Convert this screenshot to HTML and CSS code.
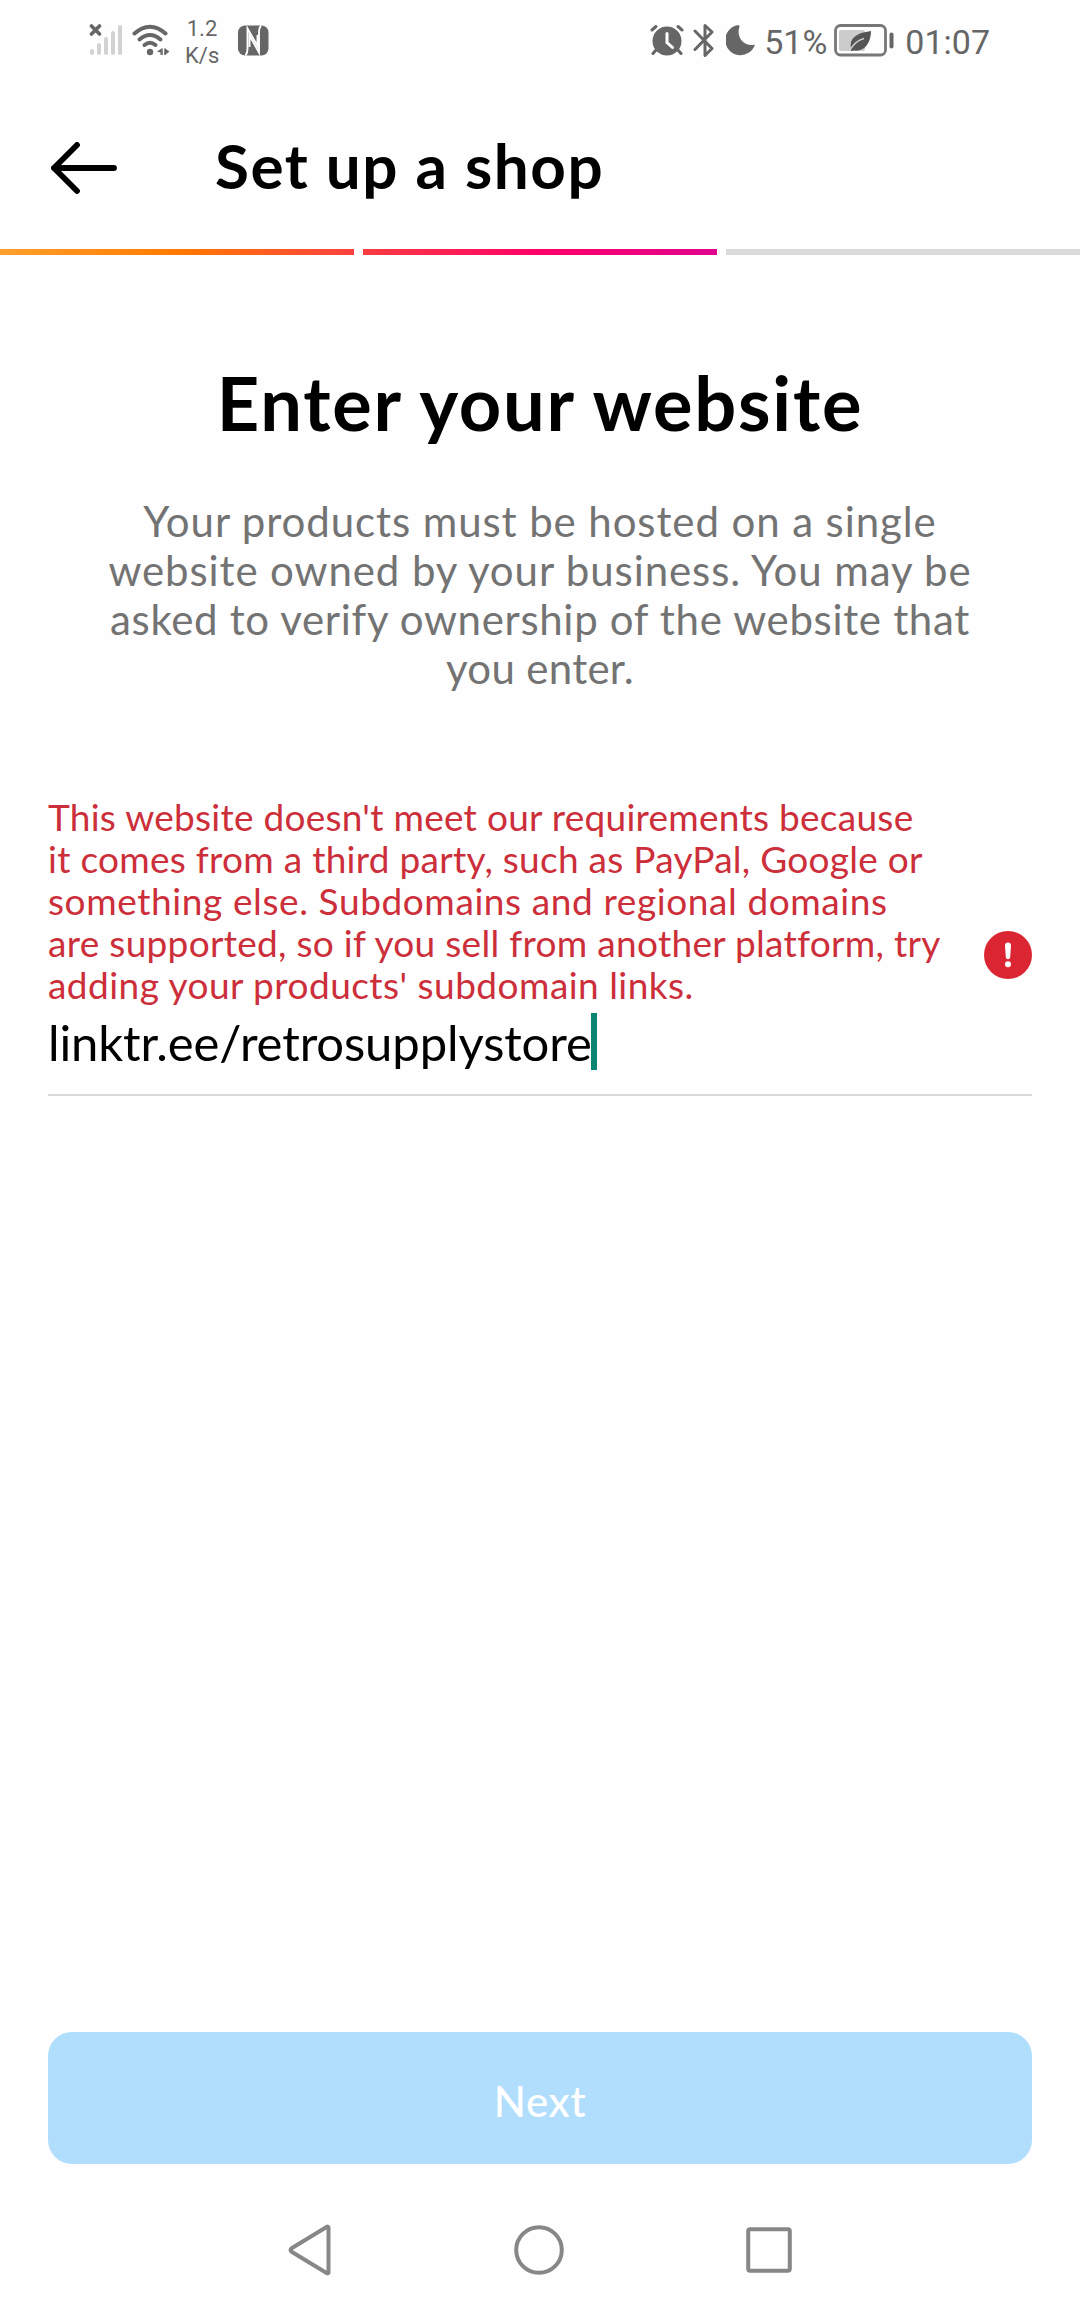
FILE: index.html
```html
<!DOCTYPE html>
<html lang="en">
<head>
    <meta charset="UTF-8">
    <meta name="viewport" content="width=device-width, initial-scale=1.0">
    <title>Set up a shop</title>
    <link rel="stylesheet" href="styles.css">
</head>
<body>
    <div class="status-bar">
        <div class="status-left">
            <!-- signal -->
            <svg class="icon-signal" width="34" height="32" viewBox="0 0 34 32">
                <g stroke="#d2d2d2" stroke-width="4" stroke-linecap="round">
                    <path d="M3 27v2M10 21v8M17 15v14M24 9v20M31 3v26"/>
                </g>
                <path d="M2.500 2l8 8M10.500 2l-8 8" stroke="#666" stroke-width="3.600" stroke-linecap="round"/>
            </svg>
            <!-- wifi -->
            <svg class="icon-wifi" width="38" height="32" viewBox="0 0 38 32">
                <g fill="none" stroke="#666" stroke-width="4" stroke-linecap="round">
                    <path d="M2.500 9.500Q18 -4 33.500 9.500"/>
                    <path d="M7.500 15.500Q18 6.500 28.500 15.500"/>
                    <path d="M12.500 21Q18 16.500 23.500 21"/>
                </g>
                <circle cx="18" cy="28" r="3.200" fill="#666"/>
                <path d="M25 27.500l4.500-3v6.500h-1v-2.500zM37.500 27.500l-4.500-3v6.500z" fill="#666"/>
                <path d="M30 24.500v6.500M33 24.500v6.500" stroke="#666" stroke-width="1.600"/>
            </svg>
            <div class="net-speed">1.2<br>K/s</div>
            <!-- nfc -->
            <svg class="icon-nfc" width="31" height="31" viewBox="0 0 31 31">
                <rect x="0" y="0.500" width="30.500" height="30" rx="7" fill="#666"/>
                <path d="M7.500 30.500Q9.500 28 9.500 24V3.500L19.500 21V10" fill="none" stroke="#fff" stroke-width="1.900"/>
                <path d="M23 .5Q21 3 21 7V27.500L11.500 10.500V22" fill="none" stroke="#fff" stroke-width="1.900"/>
            </svg>
        </div>
        <div class="status-right">
            <!-- alarm -->
            <svg width="34" height="32" viewBox="0 0 34 32">
                <circle cx="17" cy="17" r="14.500" fill="#666"/>
                <path d="M2 6l4-3.500M32 6l-4-3.500M6 26l-3 3.500M28 26l3 3.500" stroke="#666" stroke-width="3" stroke-linecap="round"/>
                <path d="M17 9.500v9l5.500 5" fill="none" stroke="#fff" stroke-width="3" stroke-linecap="round"/>
            </svg>
            <!-- bluetooth -->
            <svg class="icon-bt" width="22" height="35" viewBox="0 0 22 35">
                <path d="M2 8l17 17.500-7 7V2.500l7 6.500L2 26.500" fill="none" stroke="#666" stroke-width="3" stroke-linecap="round" stroke-linejoin="round"/>
            </svg>
            <!-- moon -->
            <svg class="icon-moon" width="30" height="32" viewBox="0 0 30 32">
                <path d="M12 1A15.200 15.200 0 1 0 29 20.500C19 23.500 9.500 14 13.500 2.500Q13.500 1 12 1z" fill="#666"/>
            </svg>
            <span class="status-text battery-text">51%</span>
            <!-- battery -->
            <svg class="icon-battery" width="61" height="33" viewBox="0 0 61 33">
                <rect x="1.500" y="1.500" width="50" height="29.500" rx="5" fill="none" stroke="#777" stroke-width="2.800"/>
                <rect x="5" y="6" width="26" height="21" rx="2" fill="#ccc"/>
                <path d="M17 25C15 14 22 9 37 7C37 18 31 28 20 26.500L17 27z" fill="#555"/>
                <path d="M16 26Q21 17 30 14.500" fill="none" stroke="#ccc" stroke-width="1.500"/>
                <rect x="55.500" y="8.500" width="4" height="16" rx="2" fill="#666"/>
            </svg>
            <span class="status-text clock">01:07</span>
        </div>
    </div>

    <header class="header">
        <svg width="68" height="52" viewBox="0 0 68 52">
            <path d="M64 26H4M27 3L4 26l23 23" fill="none" stroke="#000" stroke-width="5.800" stroke-linecap="round" stroke-linejoin="round"/>
        </svg>
        <div class="header-title">Set up a shop</div>
    </header>

    <div class="progress">
        <div class="step step-one"></div>
        <div class="step step-two"></div>
        <div class="step"></div>
    </div>

    <main class="content">
        <h1>Enter your website</h1>
        <p class="description">
            <span class="line">Your products must be hosted on a single</span>
            <span class="line">website owned by your business. You may be</span>
            <span class="line">asked to verify ownership of the website that</span>
            <span class="line">you enter.</span>
        </p>

        <div class="field">
            <div class="field-main">
                <div class="error-text">
                    <span class="line">This website doesn't meet our requirements because</span>
                    <span class="line">it comes from a third party, such as PayPal, Google or</span>
                    <span class="line">something else. Subdomains and regional domains</span>
                    <span class="line">are supported, so if you sell from another platform, try</span>
                    <span class="line">adding your products' subdomain links.</span>
                </div>
                <div class="field-value"><span class="url">linktr.ee/retrosupplystore</span><span class="caret"></span></div>
            </div>
            <svg class="error-icon" width="48" height="48" viewBox="0 0 48 48">
                <circle cx="24" cy="24" r="24" fill="#dc2533"/>
                <path d="M21 14.500a3 3 0 0 1 6 0l-.8 11.500a2.200 2.200 0 0 1-4.400 0z" fill="#fff"/>
                <circle cx="24" cy="33.200" r="3" fill="#fff"/>
            </svg>
        </div>
    </main>

    <button class="next-button">Next</button>

    <nav class="nav-bar">
        <svg width="44" height="52" viewBox="0 0 44 52">
            <path d="M40.500 3.500v45a1 1 0 0 1-1.500 .8L4 28q-3-2 0-4L39 2.700a1 1 0 0 1 1.500 .8z" fill="none" stroke="#878787" stroke-width="4" stroke-linejoin="round"/>
        </svg>
        <svg width="50" height="50" viewBox="0 0 50 50">
            <circle cx="25" cy="25" r="22.800" fill="none" stroke="#878787" stroke-width="4"/>
        </svg>
        <svg width="46" height="46" viewBox="0 0 46 46">
            <rect x="2.200" y="2.200" width="41.600" height="41.600" rx="2" fill="none" stroke="#878787" stroke-width="4"/>
        </svg>
    </nav>
</body>
</html>
```
FILE: styles.css
```css
* {
    box-sizing: border-box;
}
body {
    margin: 0;
    height: 2312px;
    display: flex;
    flex-direction: column;
    background-color: #fefefe;
    color: #000;
    font-family: Lato, "Liberation Sans", sans-serif;
    overflow: hidden;
}
svg {
    display: block;
    flex: none;
}

/* status bar */
.status-bar {
    height: 80px;
    display: flex;
    justify-content: space-between;
    align-items: center;
    padding: 0 90px 0 89px;
    color: #666;
    font-family: Roboto, sans-serif;
}
.status-left,
.status-right {
    display: flex;
    align-items: center;
}
.icon-wifi {
    margin-left: 9px;
}
.net-speed {
    width: 34px;
    margin: 4px 0 0 15px;
    font-size: 22px;
    line-height: 27px;
    text-align: center;
}
.icon-nfc {
    margin-left: 19px;
}
.icon-bt {
    margin-left: 9px;
}
.icon-moon {
    margin-left: 11px;
}
.status-text {
    font-size: 34px;
    line-height: 40px;
    margin-top: 3px;
}
.battery-text {
    margin-left: 8px;
}
.icon-battery {
    margin-left: 7px;
}
.clock {
    margin-left: 10px;
}

/* header */
.header {
    height: 169px;
    display: flex;
    align-items: center;
    padding: 0 48px 0 50px;
}
.header svg {
    margin-top: 6px;
}
.header-title {
    margin-left: 97px;
    font-size: 62px;
    font-weight: 700;
    line-height: 72px;
    letter-spacing: 1.5px;
}

/* progress steps */
.progress {
    display: flex;
    gap: 9px;
}
.step {
    flex: 1;
    height: 6px;
    background: #dadada;
}
.step-one {
    background: linear-gradient(to right, #fba02b, #ff7a00 50%, #fc4040);
}
.step-two {
    background: linear-gradient(to right, #f73c40, #ff0069 50%, #e0058f);
}

/* content */
.content {
    flex: 1;
    padding: 106px 48px 0;
}
h1 {
    margin: 0;
    font-size: 74px;
    font-weight: 700;
    line-height: 84px;
    letter-spacing: 1.75px;
    text-align: center;
}
.line {
    display: block;
    white-space: nowrap;
}
.description {
    margin: 52px 0 0;
    color: #737373;
    font-size: 42px;
    line-height: 49px;
    letter-spacing: 0.9px;
    text-align: center;
}
.description .line:nth-child(3) {
    letter-spacing: 0.68px;
}
.description .line:nth-child(4) {
    letter-spacing: 0.3px;
}
.field {
    display: flex;
    justify-content: space-between;
    align-items: center;
    margin-top: 103px;
    border-bottom: 2px solid #dadada;
    padding-bottom: 24px;
}
.error-text {
    color: #cc2e3a;
    font-size: 37px;
    line-height: 42px;
    letter-spacing: 0.27px;
}
.error-text .line:nth-child(3) {
    letter-spacing: 0.6px;
}
.error-text .line:nth-child(4) {
    letter-spacing: 0.3px;
}
.error-text .line:nth-child(5) {
    letter-spacing: 0.47px;
}
.field-value {
    display: flex;
    align-items: center;
    height: 57px;
    margin-top: 7px;
    font-size: 49px;
    letter-spacing: -0.12px;
}
.caret {
    width: 6px;
    height: 57px;
    margin-left: -1px;
    background: #0a8573;
}
.error-icon {
    margin-top: 43px;
}

/* bottom */
.next-button {
    height: 132px;
    margin: 0 48px;
    padding: 6px 0 0;
    border: none;
    border-radius: 24px;
    background-color: #b2defe;
    color: #fff;
    font-family: inherit;
    font-size: 42px;
    font-weight: 500;
    letter-spacing: 0.7px;
}
.nav-bar {
    height: 148px;
    display: flex;
    justify-content: center;
    align-items: center;
    gap: 182px;
    padding: 24px 0 0;
}
```
